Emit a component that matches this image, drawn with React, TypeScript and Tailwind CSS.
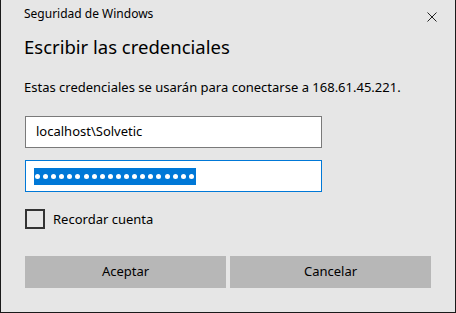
import React from "react";

export default function App() {
  const dots = Array.from({ length: 20 });
  return (
    <div
      className="w-[456px] h-[313px] bg-[#e6e6e6] border-l border-r border-b border-[#1a1a1a] text-black flex flex-col pl-[24px] pr-[24px]"
      style={{ fontFamily: '"Noto Sans", "Open Sans", sans-serif' }}
    >
      <div className="h-[32px] flex items-start justify-between pt-[6px]">
        <span className="text-[12px] leading-[16px] -ml-[1px]">Seguridad de Windows</span>
        <svg width="10" height="10" viewBox="0 0 10 10" className="mt-[6px] mr-[-6px]">
          <path d="M0.5 0.5 L9.5 9.5 M9.5 0.5 L0.5 9.5" stroke="#222" strokeWidth="1" />
        </svg>
      </div>
      <div className="h-[40px] text-[18.5px] leading-[26px] -ml-[1px] pt-[2px]">Escribir las credenciales</div>
      <div className="h-[44px] text-[13px] leading-[18px] -ml-[1px] pt-[6px]">
        Estas credenciales se usarán para conectarse a 168.61.45.221.
      </div>
      <div className="h-[32px] w-[297px] bg-white border border-[#7a7a7a] flex items-center pl-[10px] text-[13px]">
        localhost\Solvetic
      </div>
      <div className="h-[12px]" />
      <div className="h-[32px] w-[297px] bg-white border border-[#0078d7] flex items-center pl-[8px]">
        <div className="h-[17px] w-[162px] bg-[#0078d7] flex items-center pl-[1px]">
          {dots.map((_, i) => (
            <span key={i} className="w-[5px] h-[5px] rounded-full bg-white mr-[3.1px] shrink-0" />
          ))}
        </div>
      </div>
      <div className="h-[17px]" />
      <div className="flex items-center h-[20px]">
        <div className="w-[20px] h-[20px] border-2 border-[#333333] shrink-0" />
        <span className="ml-[8px] text-[13px] leading-[18px]">Recordar cuenta</span>
      </div>
      <div className="h-[27px]" />
      <div className="flex gap-[4px]">
        <div className="w-[201px] h-[32px] bg-[#b7b7b7] flex items-center justify-center text-[13px]">Aceptar</div>
        <div className="w-[201px] h-[32px] bg-[#b7b7b7] flex items-center justify-center text-[13px]">Cancelar</div>
      </div>
    </div>
  );
}
